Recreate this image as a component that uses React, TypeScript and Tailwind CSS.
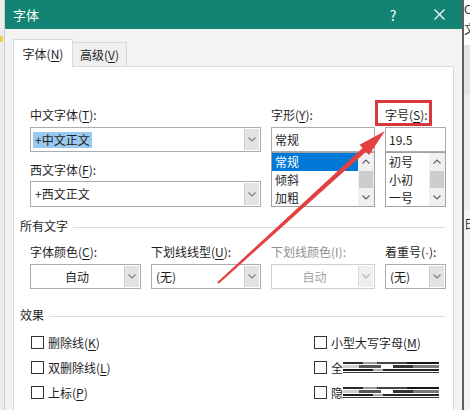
import type { ReactNode } from 'react'

function Acc({ k }: { k: string }) {
  return (
    <>
      (<span className="underline underline-offset-2">{k}</span>)
    </>
  )
}

function Label({ children, disabled }: { children: ReactNode; disabled?: boolean }) {
  return (
    <div
      className={`h-4 whitespace-nowrap text-[12px] leading-4 ${
        disabled ? 'text-[#8f8f8f]' : 'text-[#1e1e1e]'
      }`}
    >
      {children}
    </div>
  )
}

function Chevron({ up }: { up?: boolean }) {
  return (
    <svg width="8" height="5" viewBox="0 0 8 5">
      <path
        d={up ? 'M0.5 4.5 L4 1 L7.5 4.5' : 'M0.5 0.5 L4 4 L7.5 0.5'}
        fill="none"
        stroke="currentColor"
        strokeWidth="1.1"
      />
    </svg>
  )
}

function Combo({
  children,
  className,
  center,
  disabled,
}: {
  children: ReactNode
  className: string
  center?: boolean
  disabled?: boolean
}) {
  return (
    <div
      className={`flex border bg-white ${disabled ? 'border-[#d0d0d0]' : 'border-[#acacac]'} ${className}`}
    >
      <div
        className={`flex flex-1 items-center overflow-hidden whitespace-nowrap text-[12px] ${
          center ? 'justify-center' : 'pl-[4px]'
        } ${disabled ? 'text-[#a3a3a3]' : 'text-[#1e1e1e]'}`}
      >
        {children}
      </div>
      <div
        className={`m-px flex w-[15px] items-center justify-center border-l ${
          disabled
            ? 'border-[#dcdcdc] bg-[#eeeeee] text-[#b4b4b4]'
            : 'border-[#cdcdcd] bg-[#e3e3e3] text-[#7b7b7b]'
        }`}
      >
        <Chevron />
      </div>
    </div>
  )
}

function ListBox({ items, selected }: { items: string[]; selected?: number }) {
  return (
    <div className="flex h-[55px] overflow-hidden border border-[#a2a2a2] bg-white">
      <div className="flex flex-1 flex-col">
        {items.map((item, i) => (
          <div
            key={item}
            className={`h-[18px] pl-[3px] text-[12px] leading-[18px] ${
              i === selected ? 'bg-[#0078d7] text-white' : 'text-[#1e1e1e]'
            }`}
          >
            {item}
          </div>
        ))}
      </div>
      <div className="flex w-[16px] flex-col bg-[#f0f0f0]">
        <div className="flex h-[17px] items-center justify-center text-[#606060]">
          <Chevron up />
        </div>
        <div className="mx-px mt-px h-[17px] bg-[#cdcdcd]" />
        <div className="flex-1" />
        <div className="flex h-[17px] items-center justify-center text-[#606060]">
          <Chevron />
        </div>
      </div>
    </div>
  )
}

function Section({ title }: { title: string }) {
  return (
    <div className="ml-[6px] mr-[8px] flex h-4 items-center gap-[5px]">
      <span className="text-[12px] leading-4 text-[#1e1e1e]">{title}</span>
      <div className="mt-[2px] h-px flex-1 bg-[#dcdcdc]" />
    </div>
  )
}

function Glitch() {
  return (
    <div className="flex h-[12px] w-[96px] flex-col justify-between">
      <div className="flex h-[2px]">
        <div className="w-[20px] bg-[#2a2a2a]" />
        <div className="w-[14px] bg-[#9a9a9a]" />
        <div className="w-[30px] bg-[#444444]" />
        <div className="flex-1 bg-[#161616]" />
      </div>
      <div className="flex h-[3px]">
        <div className="w-[16px] bg-[#cfcfcf]" />
        <div className="w-[22px] bg-[#555555]" />
        <div className="w-[12px] bg-white" />
        <div className="w-[20px] bg-[#333333]" />
        <div className="flex-1 bg-[#7a7a7a]" />
      </div>
      <div className="flex h-[2px]">
        <div className="w-[30px] bg-[#1a1a1a]" />
        <div className="w-[10px] bg-[#aaaaaa]" />
        <div className="flex-1 bg-[#262626]" />
      </div>
      <div className="h-px bg-[#3a3a3a]" />
    </div>
  )
}

function Check({ children }: { children: ReactNode }) {
  return (
    <div className="flex h-[25px] items-center gap-[4px]">
      <div className="h-[13px] w-[13px] border border-[#333333] bg-white" />
      <div className="flex items-center whitespace-nowrap text-[12px] leading-4 text-[#1e1e1e]">
        {children}
      </div>
    </div>
  )
}

export default function App() {
  return (
    <div className="relative flex h-[410px] w-[470px] overflow-hidden bg-[#e8e8e8] font-['Noto_Sans_CJK_SC','Noto_Sans',sans-serif]">
      {/* left strip of the window behind */}
      <div className="flex w-[5px] flex-col border-r border-[#cfcfcf] bg-[#ececec]">
        <div className="mt-[36px] h-[6px] w-[3px] bg-[#e8d44a]" />
      </div>

      {/* dialog */}
      <div className="flex w-[457px] flex-col bg-[#f3f3f3]">
        <div className="flex h-[29px] items-center bg-[#138473] text-white">
          <span className="flex-1 pl-[8px] text-[13px] leading-4">字体</span>
          <div className="flex h-full w-[46px] items-center justify-center text-[14px] leading-4">?</div>
          <div className="flex h-full w-[46px] items-center justify-center">
            <svg width="11" height="11" viewBox="0 0 11 11">
              <path d="M0.5 0.5 L10.5 10.5 M10.5 0.5 L0.5 10.5" stroke="white" strokeWidth="1.1" />
            </svg>
          </div>
        </div>

        <div className="flex flex-1 flex-col px-[8px] pt-[10px]">
          {/* tabs */}
          <div className="flex h-[27px] items-end">
            <div className="relative z-10 -mb-px flex h-[28px] w-[60px] items-center justify-center border border-b-0 border-[#d9d9d9] bg-white text-[12px] text-[#1e1e1e]">
              字体<Acc k="N" />
            </div>
            <div className="flex h-[24px] w-[54px] items-center justify-center border border-b-0 border-l-0 border-[#d9d9d9] bg-[#f0f0f0] text-[12px] text-[#1e1e1e]">
              高级<Acc k="V" />
            </div>
          </div>

          {/* panel */}
          <div className="flex flex-1 flex-col border border-b-0 border-[#d9d9d9] bg-white">
            <div className="ml-[16px] mt-[40px] flex gap-[10px]">
              <div className="flex w-[231px] flex-col">
                <Label>
                  中文字体<Acc k="T" />:
                </Label>
                <Combo className="mt-[4px] h-[25px]">
                  <span className="-ml-[2px] bg-[#99c9ef] px-[2px] leading-4">+中文正文</span>
                </Combo>
                <div className="mt-[10px]">
                  <Label>
                    西文字体<Acc k="F" />:
                  </Label>
                </div>
                <Combo className="mt-[3px] h-[26px]">+西文正文</Combo>
              </div>

              <div className="flex w-[104px] flex-col">
                <Label>
                  字形<Acc k="Y" />:
                </Label>
                <div className="mt-[4px] flex h-[25px] items-center border border-[#acacac] bg-white pl-[3px] text-[12px] text-[#1e1e1e]">
                  常规
                </div>
                <ListBox items={['常规', '倾斜', '加粗']} selected={0} />
              </div>

              <div className="relative flex w-[61px] flex-col">
                <Label>
                  字号<Acc k="S" />:
                </Label>
                <div className="absolute -left-[10px] -top-[7px] h-[26px] w-[57px] border-[3px] border-[#d8383c]" />
                <div className="mt-[4px] flex h-[25px] items-center border border-[#acacac] bg-white pl-[3px] text-[12px] text-[#1e1e1e]">
                  19.5
                </div>
                <ListBox items={['初号', '小初', '一号']} />
              </div>
            </div>

            <div className="mt-[11px]">
              <Section title="所有文字" />
            </div>

            <div className="ml-[16px] mt-[10px] flex gap-[10px]">
              <div className="flex w-[111px] flex-col">
                <Label>
                  字体颜色<Acc k="C" />:
                </Label>
                <Combo className="mt-[4px] h-[25px]" center>
                  自动
                </Combo>
              </div>
              <div className="flex w-[110px] flex-col">
                <Label>
                  下划线线型<Acc k="U" />:
                </Label>
                <Combo className="mt-[4px] h-[25px]">(无)</Combo>
              </div>
              <div className="flex w-[104px] flex-col">
                <Label disabled>下划线颜色(I):</Label>
                <Combo className="mt-[4px] h-[25px]" center disabled>
                  自动
                </Combo>
              </div>
              <div className="flex w-[61px] flex-col">
                <Label>
                  着重号(<span className="font-['Liberation_Sans',sans-serif]">·</span>):
                </Label>
                <Combo className="mt-[4px] h-[25px]">(无)</Combo>
              </div>
            </div>

            <div className="mt-[18px]">
              <Section title="效果" />
            </div>

            <div className="ml-[17px] mt-[7px] flex">
              <div className="flex w-[283px] flex-col">
                <Check>
                  删除线<Acc k="K" />
                </Check>
                <Check>
                  双删除线<Acc k="L" />
                </Check>
                <Check>
                  上标<Acc k="P" />
                </Check>
              </div>
              <div className="flex flex-col">
                <Check>
                  小型大写字母<Acc k="M" />
                </Check>
                <Check>
                  <span>全</span>
                  <Glitch />
                </Check>
                <Check>
                  <span>隐</span>
                  <Glitch />
                </Check>
              </div>
            </div>
          </div>
        </div>
      </div>

      {/* right strip of the document behind */}
      <div className="flex flex-1 flex-col overflow-hidden border-l-2 border-[#5e5e5e] bg-[#f4f4f4] text-[12px] leading-4 text-[#333333]">
        <div className="bg-white pt-[1px]">Co</div>
        <div className="bg-white pb-[8px] pt-[4px]">文</div>
        <div className="h-[50px] bg-[#e4e4e4]" />
        <div className="h-[115px] bg-[#ededed]" />
        <div className="mt-[6px]">日</div>
      </div>

      {/* red annotation arrow */}
      <svg className="pointer-events-none absolute left-0 top-0" width="470" height="410" viewBox="0 0 470 410">
        <polygon
          points="218.7,283.7 366,151.7 369,155 385,131 359.6,144.7 362.6,148 217.3,282.3"
          fill="#e3403f"
        />
      </svg>
    </div>
  )
}
